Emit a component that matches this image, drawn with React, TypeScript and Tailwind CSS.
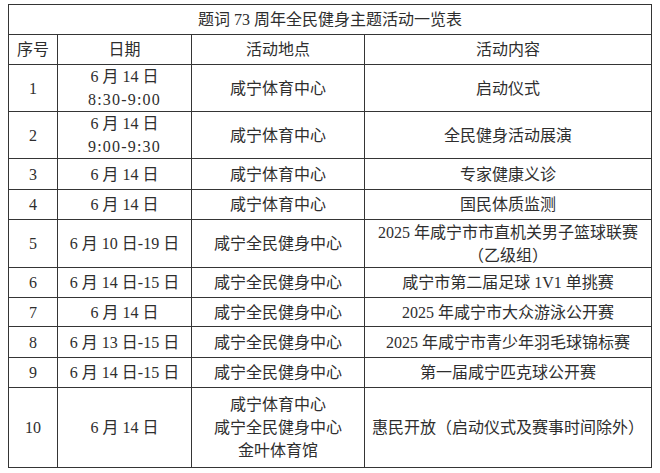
import React from "react";

type Row = {
  no: string;
  date: React.ReactNode;
  place: React.ReactNode;
  content: React.ReactNode;
  h: string;
};

// times like 8:30-9:00 are half-width in the source, so spread them a little
const Time = ({ children }: { children: React.ReactNode }) => (
  <span className="tracking-[1.2px]">{children}</span>
);

const rows: Row[] = [
  {
    no: "1",
    date: (
      <>
        6 月 14 日<br />
        <Time>8:30-9:00</Time>
      </>
    ),
    place: "咸宁体育中心",
    content: "启动仪式",
    h: "h-[47px]",
  },
  {
    no: "2",
    date: (
      <>
        6 月 14 日<br />
        <Time>9:00-9:30</Time>
      </>
    ),
    place: "咸宁体育中心",
    content: "全民健身活动展演",
    h: "h-[46px]",
  },
  { no: "3", date: "6 月 14 日", place: "咸宁体育中心", content: "专家健康义诊", h: "h-[31px]" },
  { no: "4", date: "6 月 14 日", place: "咸宁体育中心", content: "国民体质监测", h: "h-[30px]" },
  {
    no: "5",
    date: "6 月 10 日-19 日",
    place: "咸宁全民健身中心",
    content: (
      <>
        2025 年咸宁市市直机关男子篮球联赛
        <br />
        （乙级组）
      </>
    ),
    h: "h-[48px]",
  },
  {
    no: "6",
    date: "6 月 14 日-15 日",
    place: "咸宁全民健身中心",
    content: "咸宁市第二届足球 1V1 单挑赛",
    h: "h-[30px]",
  },
  {
    no: "7",
    date: "6 月 14 日",
    place: "咸宁全民健身中心",
    content: "2025 年咸宁市大众游泳公开赛",
    h: "h-[29px]",
  },
  {
    no: "8",
    date: "6 月 13 日-15 日",
    place: "咸宁全民健身中心",
    content: "2025 年咸宁市青少年羽毛球锦标赛",
    h: "h-[31px]",
  },
  {
    no: "9",
    date: "6 月 14 日-15 日",
    place: "咸宁全民健身中心",
    content: "第一届咸宁匹克球公开赛",
    h: "h-[30px]",
  },
  {
    no: "10",
    date: "6 月 14 日",
    place: (
      <>
        咸宁体育中心
        <br />
        咸宁全民健身中心
        <br />
        金叶体育馆
      </>
    ),
    content: "惠民开放（启动仪式及赛事时间除外）",
    h: "h-[80px]",
  },
];

const cell = "border border-[#353535] text-center align-middle p-0";

export default function App() {
  return (
    <div className="w-[660px] h-[473px] bg-white pt-[4px] pl-[8px] font-['Liberation_Serif','Noto_Sans_CJK_SC',serif] text-[16px] leading-[23px] text-[#2e2e2e]">
      <table className="w-[643px] table-fixed border-collapse border-[1.5px] border-[#353535]">
        <colgroup>
          <col className="w-[49px]" />
          <col className="w-[134px]" />
          <col className="w-[173px]" />
          <col className="w-[287px]" />
        </colgroup>
        <tbody>
          <tr className="h-[30px]">
            <td colSpan={4} className={cell}>
              题词 73 周年全民健身主题活动一览表
            </td>
          </tr>
          <tr className="h-[30px]">
            <td className={cell}>序号</td>
            <td className={cell}>日期</td>
            <td className={cell}>活动地点</td>
            <td className={cell}>活动内容</td>
          </tr>
          {rows.map((r) => (
            <tr key={r.no} className={r.h}>
              <td className={cell}>{r.no}</td>
              <td className={cell}>{r.date}</td>
              <td className={cell}>{r.place}</td>
              <td className={cell}>{r.content}</td>
            </tr>
          ))}
        </tbody>
      </table>
    </div>
  );
}
